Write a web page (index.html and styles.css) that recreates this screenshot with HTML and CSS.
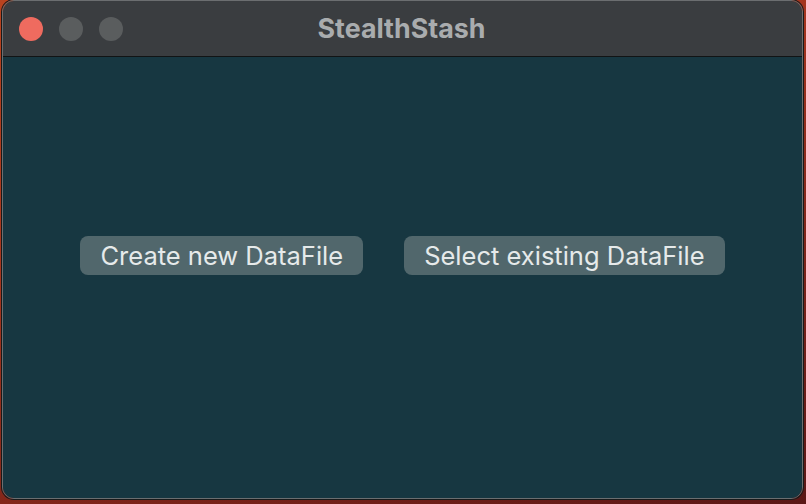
FILE: index.html
```html
<!DOCTYPE html>
<html>
<head>
<meta charset="utf-8">
<link rel="stylesheet" href="styles.css">
</head>
<body>
<div class="window">
  <div class="titlebar">
    <div class="lights">
      <span class="light close"></span>
      <span class="light"></span>
      <span class="light"></span>
    </div>
    <div class="title">StealthStash</div>
  </div>
  <div class="content">
    <button class="btn">Create new DataFile</button>
    <button class="btn">Select existing DataFile</button>
  </div>
</div>
</body>
</html>
```
FILE: styles.css
```css
html, body {
  margin: 0;
  padding: 0;
  width: 806px;
  height: 504px;
  overflow: hidden;
}
body {
  background: linear-gradient(160deg, #b9431f 0%, #a8361e 35%, #7a2319 70%, #5a1716 100%);
  font-family: Inter, "Noto Sans", sans-serif;
}
.window {
  margin-left: 2px;
  width: 799px;
  height: 497px;
  border: 1px solid #6b6e70;
  border-radius: 12px;
  overflow: hidden;
  display: flex;
  flex-direction: column;
  box-shadow: 0 0 0 1px #1a1a1a;
}
.titlebar {
  height: 55px;
  background: #3a3d40;
  border-bottom: 1px solid #111415;
  display: flex;
  align-items: center;
  position: relative;
  flex: none;
}
.lights {
  display: flex;
  gap: 16px;
  padding-left: 16px;
}
.light {
  width: 24px;
  height: 24px;
  border-radius: 50%;
  background: #5a5d5e;
}
.light.close {
  background: #ef6b5f;
}
.title {
  position: absolute;
  left: 0;
  right: 0;
  top: 0;
  bottom: 0;
  display: flex;
  align-items: center;
  justify-content: center;
  color: #a9acae;
  font-weight: 700;
  font-size: 26.8px;
  padding-right: 2px;
  padding-bottom: 1px;
}
.content {
  flex: 1;
  background: #173741;
  display: flex;
  justify-content: center;
  align-items: flex-start;
  gap: 41px;
  padding-top: 179px;
}
.btn {
  height: 39px;
  padding: 0 20px;
  border: none;
  border-radius: 8px;
  background: #51676c;
  color: #e6eaea;
  font-family: Inter, "Noto Sans", sans-serif;
  font-size: 25.5px;
  line-height: 38px;
}
```
